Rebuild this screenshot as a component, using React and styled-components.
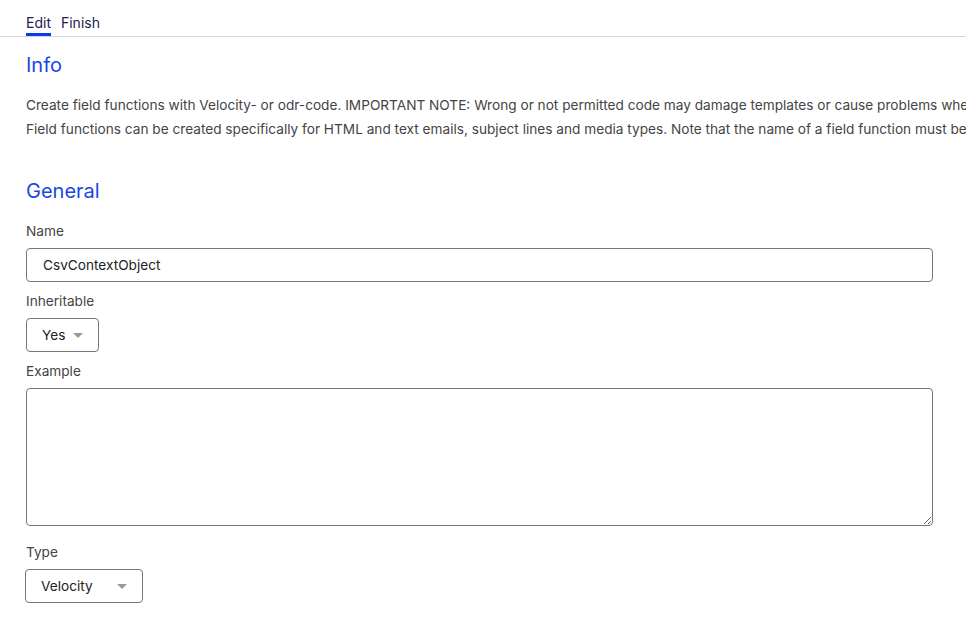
import React from "react";
import styled, { createGlobalStyle } from "styled-components";

const Global = createGlobalStyle`
  html, body { margin: 0; padding: 0; background: #fff; }
  body { font-family: Inter, "Noto Sans", sans-serif; overflow: hidden; }
  * { box-sizing: border-box; }
`;

const Page = styled.div`
  width: 966px;
  height: 625px;
  overflow: hidden;
  background: #fff;
`;

const TabBar = styled.nav`
  display: flex;
  gap: 10px;
  padding: 13px 0 0 26px;
  border-bottom: 1px solid #d6d6d6;
  height: 37px;
`;

const Tab = styled.span`
  font-size: 14px;
  line-height: 19px;
  color: #1d1d4f;
  height: 23px;
  border-bottom: 3px solid ${(p) => (p.$active ? "#0a39e8" : "transparent")};
`;

const Content = styled.main`
  padding: 0 26px;
  display: flex;
  flex-direction: column;
`;

const Heading = styled.h2`
  margin: ${(p) => p.$top}px 0 0 0;
  font-size: 20px;
  font-weight: 400;
  line-height: 26px;
  color: #1a46e4;
`;

const Para = styled.p`
  margin: 0;
  font-size: 13.65px;
  line-height: 24px;
  color: #444;
  white-space: nowrap;
`;

const Paras = styled.div`
  margin-top: 15px;
`;

const Label = styled.label`
  display: block;
  font-size: 13.65px;
  line-height: 18px;
  color: #444;
  margin-top: ${(p) => p.$top}px;
  margin-bottom: 8px;
`;

const TextInput = styled.div`
  width: 907px;
  height: 34px;
  border: 1px solid #777;
  border-radius: 4px;
  padding: 0 16px;
  display: flex;
  align-items: center;
  font-size: 13.65px;
  color: #222;
`;

const Select = styled.div`
  width: ${(p) => p.$w}px;
  height: 34px;
  border: 1px solid #777;
  border-radius: 4px;
  padding: 0 15px;
  display: flex;
  align-items: center;
  justify-content: space-between;
  font-size: 13.65px;
  color: #222;
  margin-left: ${(p) => p.$shift || 0}px;
`;

const Caret = styled.span`
  width: 0;
  height: 0;
  border-left: 5px solid transparent;
  border-right: 5px solid transparent;
  border-top: 5px solid #999;
`;

const TextArea = styled.textarea`
  width: 907px;
  height: 138px;
  border: 1px solid #777;
  border-radius: 4px;
  resize: vertical;
  font-family: inherit;
  font-size: 14px;
  display: block;
  outline: none;
`;

export default function App() {
  return (
    <Page>
      <Global />
      <TabBar>
        <Tab $active>Edit</Tab>
        <Tab>Finish</Tab>
      </TabBar>
      <Content>
        <Heading $top={15}>Info</Heading>
        <Paras>
          <Para>
            Create field functions with Velocity- or odr-code. IMPORTANT NOTE: Wrong or not permitted code may damage templates or cause problems when sending mailings.
          </Para>
          <Para>
            Field functions can be created specifically for HTML and text emails, subject lines and media types. Note that the name of a field function must be unique.
          </Para>
        </Paras>
        <Heading $top={37}>General</Heading>
        <Label $top={18}>Name</Label>
        <TextInput>CsvContextObject</TextInput>
        <Label $top={10}>Inheritable</Label>
        <Select $w={73}>
          Yes
          <Caret />
        </Select>
        <Label $top={10}>Example</Label>
        <TextArea defaultValue="" />
        <Label $top={17}>Type</Label>
        <Select $w={118} $shift={-1}>
          Velocity
          <Caret />
        </Select>
      </Content>
    </Page>
  );
}
